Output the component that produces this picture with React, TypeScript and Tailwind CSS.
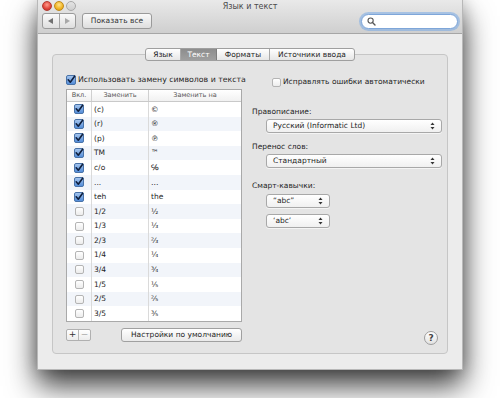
import React from 'react';

const rows = [
  { on: true, from: '(c)', to: '©' },
  { on: true, from: '(r)', to: '®' },
  { on: true, from: '(p)', to: '℗' },
  { on: true, from: 'TM', to: '™' },
  { on: true, from: 'c/o', to: '℅' },
  { on: true, from: '...', to: '…' },
  { on: true, from: 'teh', to: 'the' },
  { on: false, from: '1/2', to: '½' },
  { on: false, from: '1/3', to: '⅓' },
  { on: false, from: '2/3', to: '⅔' },
  { on: false, from: '1/4', to: '¼' },
  { on: false, from: '3/4', to: '¾' },
  { on: false, from: '1/5', to: '⅕' },
  { on: false, from: '2/5', to: '⅖' },
  { on: false, from: '3/5', to: '⅗' },
];

function Check({ on }: { on: boolean }) {
  if (!on) {
    return (
      <span className="block shrink-0 w-[9px] h-[9px] rounded-[2px] border border-[#b4b4b4] bg-gradient-to-b from-white to-[#ececec]" />
    );
  }
  return (
    <svg width="10" height="10" viewBox="0 0 10 10" className="block shrink-0">
      <defs>
        <linearGradient id="cb" x1="0" y1="0" x2="0" y2="1">
          <stop offset="0" stopColor="#a9c8ef" />
          <stop offset="1" stopColor="#4f8ad8" />
        </linearGradient>
      </defs>
      <rect x="0.5" y="0.5" width="9" height="9" rx="1.5" fill="url(#cb)" stroke="#4a73a8" />
      <path d="M2.2 4.8 L4.3 7.2 L8.6 1.2" fill="none" stroke="#0f1f3d" strokeWidth="1.6" strokeLinecap="round" strokeLinejoin="round" />
    </svg>
  );
}

function Arrows() {
  return (
    <svg width="5" height="8" viewBox="0 0 5 8" className="block">
      <path d="M2.5 0.5 L4.5 3 L0.5 3 Z" fill="#333" />
      <path d="M2.5 7.5 L4.5 5 L0.5 5 Z" fill="#333" />
    </svg>
  );
}

function Popup({ label, w }: { label: string; w: string }) {
  return (
    <div
      className={`${w} h-[14px] flex items-center justify-between pl-[6px] pr-[6px] rounded-[3px] border border-[#a8a8a8] bg-gradient-to-b from-white to-[#f0f0f0] shadow-[0_1px_0_rgba(255,255,255,0.6)]`}
    >
      <span>{label}</span>
      <Arrows />
    </div>
  );
}

export default function App() {
  return (
    <div className="w-[500px] h-[398px] bg-white overflow-hidden pl-[37px] font-['DejaVu_Sans',sans-serif] text-[#1e1e1e]">
      <div className="w-[426px] h-[370px] flex flex-col bg-[#ececec] border-x border-b border-[#b8b8b8] shadow-[0_16px_28px_rgba(0,0,0,0.75),0_0_16px_rgba(0,0,0,0.22)]">
        {/* toolbar */}
        <div className="h-[34px] shrink-0 flex flex-col px-[4px] bg-gradient-to-b from-[#e9e9e9] to-[#cfcfcf] border-b border-[#a6a6a6]">
          <div className="h-[11px] grid grid-cols-[1fr_auto_1fr] items-center">
            <div className="flex items-center gap-[2px]">
              <span className="w-[10px] h-[10px] rounded-full bg-[radial-gradient(circle_at_50%_35%,#ff9d8c,#e0443a_60%,#b52a22)] border border-[#b23a30]" />
              <span className="w-[10px] h-[10px] rounded-full bg-[radial-gradient(circle_at_50%_35%,#ffe48a,#f0b424_60%,#c98d12)] border border-[#c08a1c]" />
              <span className="w-[10px] h-[10px] rounded-full bg-gradient-to-b from-[#e4e4e4] to-[#cfcfcf] border border-[#a9a9a9]" />
            </div>
            <div className="text-[8px] text-[#4a4a4a] leading-none pt-[2px]">Язык и текст</div>
            <div />
          </div>
          <div className="mt-[2px] flex items-center">
            <div className="w-[34px] h-[16px] flex rounded-[3px] border border-[#9a9a9a] bg-gradient-to-b from-[#fafafa] to-[#dedede]">
              <div className="flex-1 flex items-center justify-center border-r border-[#a5a5a5]">
                <svg width="5" height="6" viewBox="0 0 5 6"><path d="M0 3 L5 0 L5 6 Z" fill="#707070" /></svg>
              </div>
              <div className="flex-1 flex items-center justify-center">
                <svg width="5" height="6" viewBox="0 0 5 6"><path d="M5 3 L0 0 L0 6 Z" fill="#a8a8a8" /></svg>
              </div>
            </div>
            <div className="ml-[6px] w-[70px] h-[16px] flex items-center justify-center rounded-[3px] border border-[#9a9a9a] bg-gradient-to-b from-[#fafafa] to-[#dedede] text-[7.5px] text-[#333]">
              Показать все
            </div>
            <div className="ml-auto w-[97px] h-[15px] flex items-center pl-[5px] rounded-full border border-[#7ea6d9] bg-white shadow-[0_0_0_2px_rgba(120,170,230,0.55)]">
              <svg width="9" height="9" viewBox="0 0 9 9">
                <circle cx="3.6" cy="3.6" r="2.6" fill="none" stroke="#555" strokeWidth="1.1" />
                <path d="M5.5 5.5 L8 8" stroke="#555" strokeWidth="1.4" strokeLinecap="round" />
              </svg>
            </div>
          </div>
        </div>

        {/* body */}
        <div className="flex-1 px-[14px] pt-[20px] pb-[15px]">
          <div className="relative h-[300px] rounded-[4px] border border-[#c6c6c6] bg-[#e4e4e4] flex pl-[13px] pr-[5px] pt-[20px]">
            {/* tabs */}
            <div className="absolute left-1/2 -translate-x-1/2 -top-[7px] h-[13px] flex rounded-[3px] border border-[#9f9f9f] bg-gradient-to-b from-white to-[#e6e6e6] text-[7.5px] leading-none overflow-hidden">
              <div className="w-[35px] flex items-center justify-center border-r border-[#a8a8a8]">Язык</div>
              <div className="w-[36px] flex items-center justify-center border-r border-[#7d7d7d] bg-gradient-to-b from-[#8d8d8d] to-[#9f9f9f] text-white">Текст</div>
              <div className="w-[53px] flex items-center justify-center border-r border-[#a8a8a8]">Форматы</div>
              <div className="w-[84px] flex items-center justify-center">Источники ввода</div>
            </div>

            {/* left column */}
            <div className="w-[176px] flex flex-col">
              <div className="h-[10px] flex items-center gap-[2px] text-[7.8px] leading-none whitespace-nowrap">
                <Check on />
                <span>Использовать замену символов и текста</span>
              </div>
              <div className="mt-[4px] border border-[#a9a9a9] bg-white">
                <div className="h-[12px] flex border-b border-[#c9c9c9] bg-gradient-to-b from-white to-[#f1f1f1] text-[6.5px] text-[#555] leading-none">
                  <div className="w-[25px] flex items-center justify-center border-r border-[#d0d0d0]">Вкл.</div>
                  <div className="w-[57px] flex items-center justify-center border-r border-[#d0d0d0]">Заменить</div>
                  <div className="flex-1 flex items-center justify-center">Заменить на</div>
                </div>
                {rows.map((r, i) => (
                  <div
                    key={i}
                    className={`h-[14.6px] flex text-[7.5px] leading-none ${i % 2 === 1 ? 'bg-[#f2f5fa]' : 'bg-white'}`}
                  >
                    <div className="w-[25px] flex items-center justify-center border-r border-[#dadada]">
                      <Check on={r.on} />
                    </div>
                    <div className="w-[57px] flex items-center pl-[2px] border-r border-[#dadada]">{r.from}</div>
                    <div className="flex-1 flex items-center pl-[2px]">{r.to}</div>
                  </div>
                ))}
              </div>
              <div className="mt-[6px] flex items-center">
                <div className="flex h-[12px] rounded-[2px] border border-[#b0b0b0] bg-gradient-to-b from-white to-[#ececec] text-[9px] leading-none">
                  <div className="w-[12px] flex items-center justify-center border-r border-[#b8b8b8] text-[#333]">+</div>
                  <div className="w-[11px] flex items-center justify-center text-[#aaa]">−</div>
                </div>
                <div className="ml-auto w-[121px] h-[14px] flex items-center justify-center rounded-[3px] border border-[#a0a0a0] bg-gradient-to-b from-white to-[#eaeaea] text-[7.5px] leading-none">
                  Настройки по умолчанию
                </div>
              </div>
            </div>

            {/* right column */}
            <div className="ml-[10px] flex-1 flex flex-col text-[7.5px] leading-none">
              <div className="mt-[2px] pl-[20px] h-[10px] flex items-center gap-[2px] whitespace-nowrap">
                <Check on={false} />
                <span>Исправлять ошибки автоматически</span>
              </div>
              <div className="mt-[21px]">Правописание:</div>
              <div className="mt-[3px] pl-[14px]">
                <Popup label="Русский (Informatic Ltd)" w="w-full" />
              </div>
              <div className="mt-[10px]">Перенос слов:</div>
              <div className="mt-[4px] pl-[14px]">
                <Popup label="Стандартный" w="w-full" />
              </div>
              <div className="mt-[14px]">Смарт-кавычки:</div>
              <div className="mt-[4px] pl-[14px]">
                <Popup label="“abc”" w="w-[64px]" />
              </div>
              <div className="mt-[6px] pl-[14px]">
                <Popup label="‘abc’" w="w-[64px]" />
              </div>
              <div className="mt-auto mb-[8px] mr-[4px] self-end w-[14px] h-[14px] rounded-full border border-[#9d9d9d] bg-gradient-to-b from-white to-[#e2e2e2] flex items-center justify-center text-[9px] font-bold text-[#444]">
                ?
              </div>
            </div>
          </div>
        </div>
      </div>
    </div>
  );
}
